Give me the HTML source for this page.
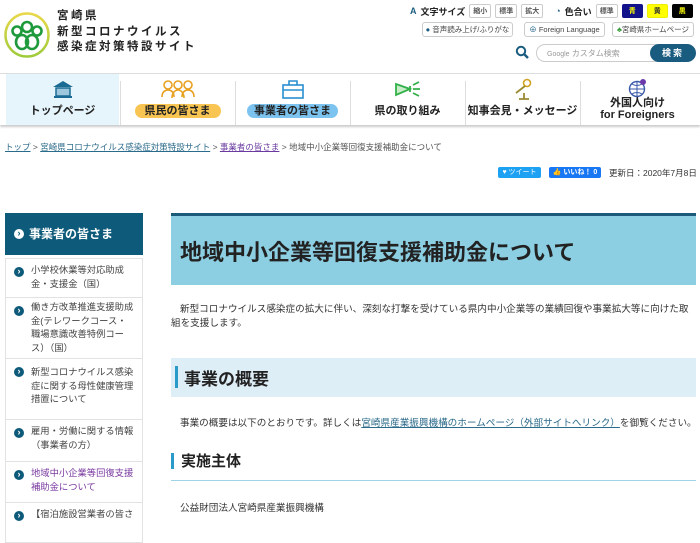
<!DOCTYPE html>
<html><head><meta charset="utf-8"><style>
*{margin:0;padding:0;box-sizing:border-box}
body{width:700px;height:521px;overflow:hidden;background:#fff;font-family:"Liberation Sans","Noto Sans CJK JP",sans-serif;color:#333;position:relative}
.a{position:absolute}
.t{font-size:11.5px;font-weight:bold;letter-spacing:2.5px;color:#222;line-height:15.5px}
.sb{border:1px solid #ccc;font-size:7px;color:#555;padding:1px 3px;background:#fff;border-radius:2px}
.pill{border:1px solid #ccc;border-radius:3px;font-size:7.5px;color:#444;height:15px;line-height:13px;background:#fff;white-space:nowrap;overflow:hidden;text-align:center}
.nav{top:73px;height:52px;border-top:1px solid #ddd;box-shadow:0 2px 2px #ccc;left:0;width:700px}
.ni{position:absolute;top:0;height:51px;width:113px;text-align:center}
.sep{position:absolute;top:7px;width:1px;height:44px;background:#ddd}
.lab{position:absolute;left:0;right:0;top:28px;font-size:11px;font-weight:bold;color:#222}
.side{left:5px;width:138px;top:213px}
.si{border:1px solid #e2e2e2;border-top:none;padding:5px 0 0 25px;font-size:9.3px;line-height:13.5px;color:#444;position:relative;background:#fff;overflow:hidden;white-space:nowrap}
.si:before{content:"›";position:absolute;left:8px;top:8px;width:10px;height:10px;border-radius:50%;background:#0e5a7a;color:#fff;font-size:9px;line-height:9px;text-align:center;font-weight:bold}
p{font-size:9.6px;color:#333}
</style></head><body>
<svg class="a" style="left:4px;top:12px" width="46" height="46" viewBox="0 0 46 46"><defs><linearGradient id="g" x1="0" y1="0" x2="0" y2="1"><stop offset="0" stop-color="#e8d84a"/><stop offset="1" stop-color="#9ecb3a"/></linearGradient></defs><circle cx="23" cy="23" r="21.5" fill="#fff" stroke="url(#g)" stroke-width="2.5"/><g fill="none" stroke="#1e9a3c" stroke-width="2.6"><circle cx="23" cy="15" r="5"/><circle cx="13" cy="19" r="4.5"/><circle cx="33" cy="19" r="4.5"/><ellipse cx="18" cy="30" rx="6" ry="7"/><ellipse cx="28" cy="30" rx="6" ry="7"/></g></svg>
<div class="a t" style="left:57px;top:9px">宮崎県<br>新型コロナウイルス<br>感染症対策特設サイト</div>
<div class="a" style="left:410px;top:4px;font-size:9px;font-weight:bold;color:#222;display:flex;gap:4px;align-items:center"><span style="color:#1a5c80">A</span>文字サイズ<span class="sb">縮小</span><span class="sb">標準</span><span class="sb">拡大</span><span style="margin-left:8px;color:#1a5c80">◔</span>色合い<span class="sb">標準</span><span class="sb" style="background:#12128a;color:#ff0;border-color:#12128a;padding:1px 6px">青</span><span class="sb" style="background:#ff0;color:#333;border-color:#ee0;padding:1px 6px">黄</span><span class="sb" style="background:#000;color:#ff0;border-color:#000;padding:1px 6px">黒</span></div>
<div class="a pill" style="left:422px;top:22px;width:91px"><b style="color:#1a5c80">●</b> 音声読み上げ/ふりがな</div>
<div class="a pill" style="left:524px;top:22px;width:81px"><span style="color:#1a5c80">⊕</span> Foreign Language</div>
<div class="a pill" style="left:612px;top:22px;width:82px"><span style="color:#3a9a3a">♣</span>宮崎県ホームページ</div>
<svg class="a" style="left:515px;top:45px" width="14" height="14"><circle cx="6" cy="6" r="4.2" fill="none" stroke="#1a5c80" stroke-width="2"/><path d="M9 9l4 4" stroke="#1a5c80" stroke-width="2.4"/></svg>
<div class="a" style="left:536px;top:44px;width:132px;height:18px;border:1px solid #ccc;border-radius:9px;font-size:8px;color:#999;padding:3px 10px"><span style="font-size:7px">Google</span> カスタム検索</div>
<div class="a" style="left:650px;top:44px;width:46px;height:18px;background:#1a5c80;border-radius:9px;color:#fff;font-size:9px;font-weight:bold;text-align:center;line-height:18px;letter-spacing:2px">検索</div>
<div class="a nav">
<div class="ni" style="left:6px;background:#e6f4fb"><svg style="margin-top:6px" width="22" height="18"><path d="M11 1L1 7h20z" fill="#1a6b94"/><rect x="4" y="8" width="14" height="8" fill="#9cc7dc" stroke="#1a6b94" stroke-width="1.5"/><rect x="2" y="16" width="18" height="2" fill="#1a6b94"/></svg><div class="lab">トップページ</div></div>
<div class="sep" style="left:120px"></div>
<div class="ni" style="left:121px"><svg style="margin-top:5px" width="36" height="20"><g fill="none" stroke="#e8a020" stroke-width="1.6"><circle cx="8" cy="6" r="4"/><circle cx="18" cy="6" r="4"/><circle cx="28" cy="6" r="4"/><path d="M2 18c0-5 3-7 6-7s6 2 6 7M12 19c0-5 3-8 6-8s6 3 6 8M22 18c0-5 3-7 6-7s6 2 6 7"/></g></svg><div class="lab" style="top:28px"><span style="background:#f8c552;border-radius:8px;padding:1px 10px">県民の皆さま</span></div></div>
<div class="sep" style="left:235px"></div>
<div class="ni" style="left:236px"><svg style="margin-top:5px" width="24" height="20"><g fill="none" stroke="#2a8fd0" stroke-width="1.6"><rect x="2" y="6" width="20" height="13"/><path d="M8 6V2h8v4M2 11h20"/></g></svg><div class="lab"><span style="background:#7cc4ef;border-radius:8px;padding:1px 7px">事業者の皆さま</span></div></div>
<div class="sep" style="left:350px"></div>
<div class="ni" style="left:351px"><svg style="margin-top:5px" width="28" height="20"><path d="M2 5l14 5v0L2 16z M16 7v6" fill="#c8eec8" stroke="#33b04a" stroke-width="1.8"/><path d="M19 6l6-3M19 10h7M19 14l6 3" stroke="#33b04a" stroke-width="1.8"/></svg><div class="lab">県の取り組み</div></div>
<div class="sep" style="left:465px"></div>
<div class="ni" style="left:466px"><svg style="margin-top:4px" width="24" height="22"><circle cx="16" cy="5" r="3.5" fill="none" stroke="#d0a020" stroke-width="1.6"/><path d="M14 8L5 15M8 21h10M13 21v-6" stroke="#9a8a30" stroke-width="1.8"/></svg><div class="lab">知事会見・メッセージ</div></div>
<div class="sep" style="left:580px"></div>
<div class="ni" style="left:581px"><svg style="margin-top:4px" width="22" height="20"><circle cx="10" cy="11" r="7.5" fill="none" stroke="#3a5aaa" stroke-width="1.4"/><path d="M3 11h15M10 3.5v15M5 6c3 2 7 2 10 0M5 16c3-2 7-2 10 0" stroke="#3a5aaa" fill="none" stroke-width="1"/><circle cx="16" cy="4" r="3" fill="#6a3aaa"/></svg><div class="lab" style="top:23px;line-height:12px">外国人向け<br>for Foreigners</div></div>
</div>
<div class="a" style="left:5px;top:141px;font-size:8.5px;color:#555"><u style="color:#2a6a8a">トップ</u> &gt; <u style="color:#2a6a8a">宮崎県コロナウイルス感染症対策特設サイト</u> &gt; <u style="color:#6a3aa0">事業者の皆さま</u> &gt; 地域中小企業等回復支援補助金について</div>
<div class="a" style="left:498px;top:167px;width:43px;height:11px;background:#1da1f2;border-radius:2px;color:#fff;font-size:7px;text-align:center;line-height:11px">♥ ツイート</div>
<div class="a" style="left:549px;top:167px;width:52px;height:11px;background:#1877f2;border-radius:2px;color:#fff;font-size:7px;text-align:center;line-height:11px;font-weight:bold">👍 いいね！ 0</div>
<div class="a" style="left:609px;top:167px;font-size:8.5px;color:#333">更新日：2020年7月8日</div>
<div class="a side">
<div style="background:#0e5a7a;color:#fff;font-weight:bold;font-size:12px;height:42px;line-height:42px;padding-left:24px;position:relative"><span style="position:absolute;left:9px;top:16px;width:10px;height:10px;border-radius:50%;background:#fff;color:#0e5a7a;font-size:9px;line-height:9px;text-align:center">›</span>事業者の皆さま</div>
<div style="height:3px"></div>
<div class="si" style="border-top:1px solid #e2e2e2;height:40px">小学校休業等対応助成<br>金・支援金（国）</div>
<div class="si" style="height:61px;padding-top:3px">働き方改革推進支援助成<br>金(テレワークコース・<br>職場意識改善特例コー<br>ス）（国）</div>
<div class="si" style="height:61px;padding-top:7px">新型コロナウイルス感染<br>症に関する母性健康管理<br>措置について</div>
<div class="si" style="height:42px">雇用・労働に関する情報<br>（事業者の方）</div>
<div class="si" style="color:#7a3aa0;height:41px">地域中小企業等回復支援<br>補助金について</div>
<div class="si" style="height:40px">【宿泊施設営業者の皆さ</div>
</div>
<div class="a" style="left:171px;top:213px;width:525px;height:72px;background:#8ccfe3;border-top:3px solid #1c5a7a"><div style="position:absolute;left:9px;top:19px;font-size:22px;font-weight:bold;color:#222">地域中小企業等回復支援補助金について</div></div>
<p class="a" style="left:171px;top:303px;width:527px;line-height:14px;text-indent:9px">新型コロナウイルス感染症の拡大に伴い、深刻な打撃を受けている県内中小企業等の業績回復や事業拡大等に向けた取組を支援します。</p>
<div class="a" style="left:171px;top:358px;width:525px;height:39px;background:#deeef7"><div style="position:absolute;left:4px;top:8px;width:3px;height:22px;background:#2a9ac8"></div><div style="position:absolute;left:13px;top:7px;font-size:17px;font-weight:bold;color:#222">事業の概要</div></div>
<p class="a" style="left:180px;top:415px;white-space:nowrap">事業の概要は以下のとおりです。詳しくは<u style="color:#2a6a8a">宮崎県産業振興機構のホームページ（外部サイトへリンク）</u>を御覧ください。</p>
<div class="a" style="left:171px;top:453px;width:3px;height:16px;background:#2a9ac8"></div>
<div class="a" style="left:181px;top:450px;font-size:15px;font-weight:bold;color:#222">実施主体</div>
<div class="a" style="left:171px;top:480px;width:525px;height:1px;background:#9fd3ea"></div>
<p class="a" style="left:180px;top:500px">公益財団法人宮崎県産業振興機構</p>
</body></html>
